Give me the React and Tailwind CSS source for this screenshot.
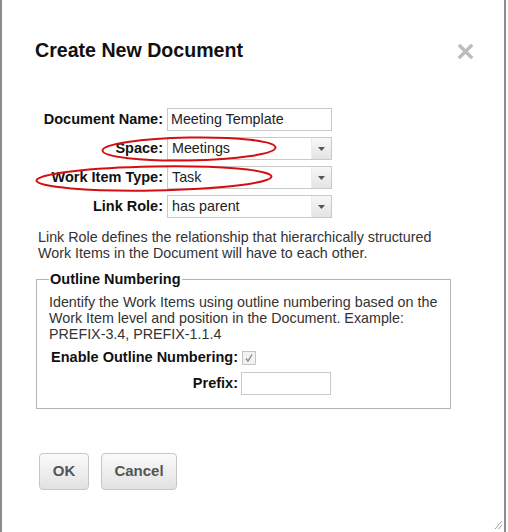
import React from 'react';

const FONT = "font-['Liberation_Sans',Arial,sans-serif]";

// ─── small drawings ────────────────────────────────────────────────────────
const CloseIcon = () => (
  <svg width="15" height="15" viewBox="0 0 15 15" className="mt-[4px]">
    <path d="M2 2 L13 13 M13 2 L2 13" stroke="#bdbdbd" strokeWidth="3.4" strokeLinecap="square" />
  </svg>
);

const Caret = () => (
  <svg width="7" height="4" viewBox="0 0 7 4">
    <path d="M0 0 H7 L3.5 4 Z" fill="#555" />
  </svg>
);

const Ellipse = ({ className, w, h }) => (
  <svg
    width={w}
    height={h}
    viewBox={`0 0 ${w} ${h}`}
    className={`absolute pointer-events-none ${className}`}
  >
    <ellipse
      cx={w / 2}
      cy={h / 2}
      rx={w / 2 - 1.5}
      ry={h / 2 - 1.5}
      fill="none"
      stroke="#d40f14"
      strokeWidth="2"
      transform={`rotate(-1 ${w / 2} ${h / 2})`}
    />
  </svg>
);

const TextInput = ({ value, className = '' }) => (
  <div className={`h-[23px] border border-[#c9c9c9] bg-white px-[3px] flex items-center text-[14.3px] text-[#222] ${className}`}>
    {value}
  </div>
);

const Select = ({ value }) => (
  <div className="h-[23px] w-[165px] border border-[#c9c9c9] bg-white flex items-stretch text-[14.3px] text-[#222]">
    <div className="flex-1 px-[4px] flex items-center">{value}</div>
    <div className="w-[20px] bg-gradient-to-b from-[#f7f7f7] to-[#e4e4e4] border-l border-[#ececec] flex items-center justify-center">
      <Caret />
    </div>
  </div>
);

const Row = ({ label, children }) => (
  <div className="flex items-center gap-[4px]">
    <div className="w-[131px] ml-[30px] text-right font-bold text-[14.5px] text-[#111] whitespace-nowrap">{label}</div>
    {children}
  </div>
);

const Button = ({ children, className = '' }) => (
  <button
    className={`h-[37px] rounded-[4px] border border-[#c6c6c6] bg-gradient-to-b from-[#fafafa] to-[#e2e2e2] font-bold text-[15px] text-[#555] ${className}`}
  >
    {children}
  </button>
);

// ─── MAIN APP ──────────────────────────────────────────────────────────────
const App = () => {
  return (
    <div className={`${FONT} relative w-[506px] h-[532px] bg-white border-x-2 border-[#8c8c8c] text-[#222]`}>
      {/* header */}
      <div className="flex items-start justify-between pt-[40px] pl-[33px] pr-[31px]">
        <h1 className="text-[19.6px] leading-[21px] font-bold text-[#111]">Create New Document</h1>
        <CloseIcon />
      </div>

      {/* main form */}
      <div className="relative mt-[47px] flex flex-col gap-[6px]">
        <Row label="Document Name:">
          <TextInput value="Meeting Template" className="w-[165px]" />
        </Row>
        <Row label="Space:">
          <Select value="Meetings" />
        </Row>
        <Row label="Work Item Type:">
          <Select value="Task" />
        </Row>
        <Row label="Link Role:">
          <Select value="has parent" />
        </Row>

        <Ellipse className="left-[99px] top-[28px]" w={176} h={26} />
        <Ellipse className="left-[33px] top-[57px]" w={238} h={27} />
      </div>

      <p className="mt-[11px] ml-[36px] w-[420px] text-[14.3px] leading-[16px] text-[#333]">
        Link Role defines the relationship that hierarchically structured Work Items in the Document will have to each other.
      </p>

      {/* outline numbering */}
      <fieldset className="mt-[10px] ml-[34px] w-[415px] border border-[#b4b4b4] px-[12px] pb-[13px]">
        <legend className="px-[1px] font-bold text-[14.5px] leading-[16px] text-[#111]">Outline Numbering</legend>
        <p className="mt-[7px] text-[14.3px] leading-[16px] text-[#333]">
          Identify the Work Items using outline numbering based on the Work Item level and position in the Document. Example: PREFIX-3.4, PREFIX-1.1.4
        </p>
        <div className="mt-[8px] flex items-center gap-[4px] h-[16px]">
          <div className="w-[189px] text-right font-bold text-[14.5px] text-[#111] whitespace-nowrap">Enable Outline Numbering:</div>
          <div className="w-[14px] h-[14px] border border-[#c4c4c4] bg-[#f2f2f2] flex items-center justify-center">
            <svg width="10" height="10" viewBox="0 0 10 10">
              <path d="M2 5.5 L4 8 L8 1.5" fill="none" stroke="#8a8a8a" strokeWidth="1.4" />
            </svg>
          </div>
        </div>
        <div className="mt-[6px] flex items-center gap-[3px]">
          <div className="w-[189px] text-right font-bold text-[14.5px] text-[#111]">Prefix:</div>
          <TextInput value="" className="w-[90px] h-[22px]" />
        </div>
      </fieldset>

      {/* footer buttons */}
      <div className="mt-[44px] ml-[37px] flex gap-[12px]">
        <Button className="w-[50px]">OK</Button>
        <Button className="w-[76px]">Cancel</Button>
      </div>

      {/* resize grip */}
      <svg width="9" height="11" viewBox="0 0 9 11" className="absolute right-[1px] bottom-[2px]">
        <path d="M1 10 L8 2 M4.5 10 L8 6" stroke="#9a9a9a" strokeWidth="1" />
      </svg>
    </div>
  );
};

export default App;
